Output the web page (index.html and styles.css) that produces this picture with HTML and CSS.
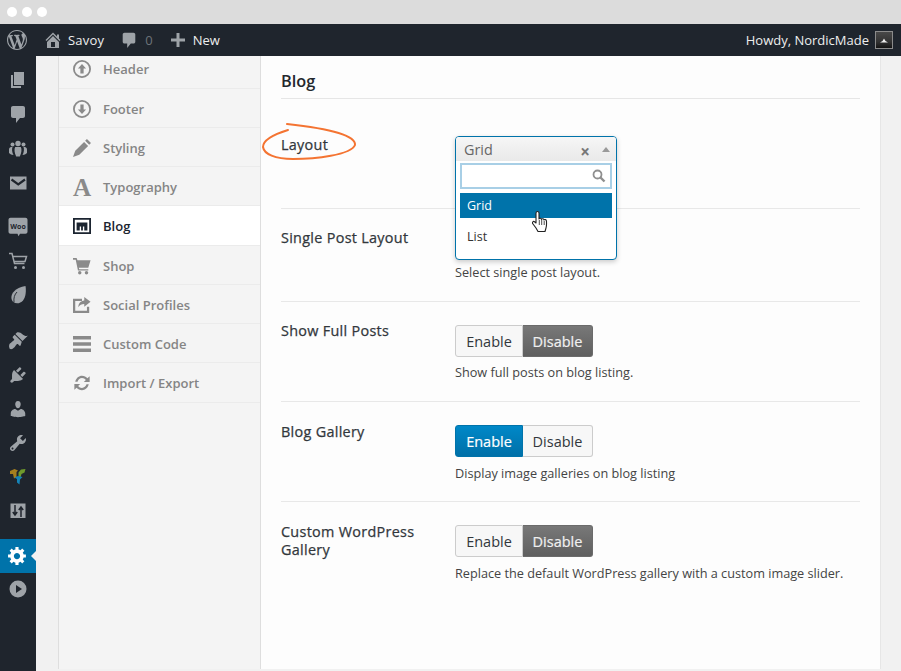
FILE: index.html
```html
<!DOCTYPE html>
<html lang="en">
<head>
<meta charset="utf-8">
<title>Blog settings</title>
<link rel="stylesheet" href="styles.css">
</head>
<body>
<div class="chrome"><i class="dot"></i><i class="dot"></i><i class="dot"></i></div>
<header class="adminbar">
  <svg class="ab-logo" viewBox="0 0 20 20"><path d="M20 10c0-5.51-4.49-10-10-10C4.48 0 0 4.49 0 10c0 5.52 4.48 10 10 10 5.51 0 10-4.48 10-10zM7.78 15.37L4.37 6.22c.55-.02 1.17-.08 1.17-.08.5-.06.44-1.13-.06-1.11 0 0-1.45.11-2.37.11-.18 0-.37 0-.58-.01C4.12 2.69 6.87 1.11 10 1.11c2.33 0 4.45.87 6.05 2.34-.68-.11-1.65.39-1.65 1.58 0 .74.45 1.36.9 2.1.35.61.55 1.36.55 2.46 0 1.49-1.4 5-1.4 5l-3.03-8.37c.54-.02.82-.17.82-.17.5-.05.44-1.25-.06-1.22 0 0-1.44.12-2.38.12-.87 0-2.33-.12-2.33-.12-.5-.03-.56 1.2-.06 1.22l.92.08 1.26 3.41zM17.41 10c.24-.64.74-1.87.43-4.25.7 1.29 1.05 2.71 1.05 4.25 0 3.29-1.73 6.24-4.4 7.78.97-2.59 1.94-5.2 2.92-7.78zM6.1 18.09C3.12 16.65 1.11 13.53 1.11 10c0-1.3.23-2.48.72-3.59C3.25 10.3 4.67 14.2 6.1 18.09zm4.03-6.63l2.58 6.98c-.86.29-1.76.45-2.71.45-.79 0-1.57-.11-2.29-.33.81-2.38 1.62-4.72 2.42-7.1z"/></svg>
  <svg class="ab-home" viewBox="0 0 20 20"><path d="M16 8.5l1.53 1.53-1.06 1.06L10 4.62l-6.47 6.47-1.06-1.06L10 2.5l4 4v-2h2v4zm-6-2.46l6 5.99V18H4v-5.97zM12 17v-5H8v5h4z"/></svg>
  <span class="ab-text ab-site">Savoy</span>
  <svg class="ab-comment" viewBox="0 0 20 20"><path d="M5 2h10c1.1 0 2 .9 2 2v8c0 1.1-.9 2-2 2h-3l-4 5v-5H5c-1.1 0-2-.9-2-2V4c0-1.100.9-2 2-2z"/></svg>
  <span class="ab-count">0</span>
  <svg class="ab-plus" viewBox="0 0 14 14"><path d="M5.500 0h3v5.500H14v3H8.500V14h-3V8.500H0v-3h5.500z"/></svg>
  <span class="ab-text">New</span>
  <span class="ab-text ab-howdy">Howdy, NordicMade</span>
  <svg class="ab-avatar" viewBox="0 0 18 18"><defs><linearGradient id="av" x1="0" y1="0" x2="0" y2="1"><stop offset="0" stop-color="#4a4a4a"/><stop offset=".6" stop-color="#333"/><stop offset="1" stop-color="#111"/></linearGradient></defs><rect x=".5" y=".5" width="17" height="17" fill="url(#av)" stroke="#8b8b8b"/><path d="M5 11.500l2.500-1.500L9 7.500l1.500 2.500 2.500 1.500z" fill="#eee"/></svg>
</header>
<div class="layout">
  <nav class="sidemenu">
    <svg class="sm" viewBox="0 0 20 20"><path d="M6 15V2h10v13H6zm-1 1h8v2H3V5h2v11z"/></svg>
    <svg class="sm" viewBox="0 0 20 20"><path d="M5 2h10c1.1 0 2 .9 2 2v8c0 1.1-.9 2-2 2h-3l-4 5v-5H5c-1.1 0-2-.9-2-2V4c0-1.100.9-2 2-2z"/></svg>
    <svg class="sm" viewBox="0 0 20 20"><circle cx="4.500" cy="6.500" r="2"/><circle cx="15.500" cy="6.500" r="2"/><circle cx="10" cy="5.500" r="2.700"/><path d="M1 15v-3.500c0-1.500 1-2.500 2.300-2.500h1.200c-.8 2-.5 5.500 1 8-2 0-3.200-1-4.500-2zM19 15v-3.500c0-1.500-1-2.500-2.300-2.500h-1.200c.8 2 .5 5.500-1 8 2 0 3.200-1 4.500-2zM7.200 9h5.600c1.200 2 .8 6-1 9.500H8.200c-1.800-3.500-2.200-7.500-1-9.500z"/></svg>
    <svg class="sm" viewBox="0 0 20 20"><path d="M2 3.500h16.500v13H2z"/><path d="M3.500 6.500l6.750 4.800 6.750-4.800" fill="none" stroke="#1f252d" stroke-width="2.200"/></svg>
    <svg class="sm sm-gap" viewBox="0 0 20 20"><path d="M2.500 .8h15c1.100 0 2 .9 2 2v12c0 1.100-.9 2-2 2h-5.500l-1.500 2.500-1-2.500H2.500c-1.100 0-2-.9-2-2v-12c0-1.100.9-2 2-2z"/><text x="10" y="11.500" text-anchor="middle" class="woo">Woo</text></svg>
    <svg class="sm" viewBox="0 0 20 20"><path d="M1 2.500h3l2.500 10h10M4.800 5.500H18.500l-1.500 5H6" fill="none" stroke="#9ea3a8" stroke-width="1.500"/><circle cx="7.500" cy="16.500" r="1.500"/><circle cx="15.500" cy="16.500" r="1.500"/></svg>
    <svg class="sm" viewBox="0 0 20 20"><path d="M17.500 1c.8 5 .3 11-2.500 14.500-2.500 3-6.800 3.800-9.500 1.600C2.700 14.800 2.800 10.500 5.300 7.200 8 3.700 13 1.500 17.500 1z"/><path d="M9 7C6.500 9.500 5.500 13 6 17" fill="none" stroke="#1f252d" stroke-width=".9"/></svg>
    <svg class="sm sm-gap-l" viewBox="0 0 20 20"><path d="M14.480 11.060L7.410 3.990l1.500-1.500c.5-.56 2.300-.47 3.510.32 1.210.8 1.430 1.280 2.910 2.100 1.180.64 2.450 1.260 4.450.85zm-.71.710L6.700 4.700 4.930 6.470c-.39.39-.39 1.020 0 1.410l1.060 1.060c.39.39.39 1.030 0 1.420-.6.600-1.430 1.110-2.210 1.690-.35.260-.7.530-1.010.84C1.430 13.230.4 15.130 1.500 18.500c1.470 1.470 3.350.42 4.710-.91.31-.31.58-.66.84-1.010.58-.78 1.090-1.610 1.690-2.210.39-.39 1.020-.39 1.410 0l1.060 1.060c.39.39 1.020.39 1.410 0z"/></svg>
    <svg class="sm" viewBox="0 0 20 20"><path d="M13.110 4.360L9.870 7.600 8 5.730l3.240-3.240c.35-.34 1.050-.2 1.560.32.52.51.66 1.210.31 1.550zm-8 1.770l.91-1.120 9.010 9.010-1.190.84c-.71.71-2.630 1.160-3.820 1.160H6.140L4.900 17.260c-.59.59-1.540.59-2.120 0-.59-.58-.59-1.530 0-2.120l1.240-1.240v-3.880c0-1.130.4-3.190 1.090-3.890zm7.260 3.970l3.240-3.240c.34-.35 1.040-.21 1.550.31.52.51.66 1.210.31 1.550l-3.240 3.250z"/></svg>
    <svg class="sm" viewBox="0 0 20 20"><path d="M10 9.250c-2.270 0-2.730-3.440-2.730-3.440C7 4.020 7.820 2 9.970 2c2.160 0 2.980 2.020 2.710 3.810 0 0-.41 3.440-2.680 3.440zm0 2.570L12.720 10c2.390 0 4.520 2.330 4.520 4.530v2.490s-3.650 1.130-7.240 1.130c-3.650 0-7.240-1.130-7.240-1.130v-2.490c0-2.250 1.940-4.480 4.470-4.480z"/></svg>
    <svg class="sm" viewBox="0 0 20 20"><path d="M16.680 9.770c-1.340 1.340-3.300 1.670-4.950.99l-5.410 6.520c-.99.99-2.590.99-3.580 0s-.99-2.590 0-3.570l6.520-5.420c-.68-1.650-.35-3.610.99-4.950 1.280-1.280 3.120-1.620 4.720-1.060l-2.890 2.890 2.820 2.820 2.860-2.870c.53 1.580.18 3.390-1.080 4.650zM3.810 16.210c.4.39 1.040.39 1.430 0 .4-.4.4-1.040 0-1.430-.39-.4-1.030-.4-1.430 0-.39.39-.39 1.030 0 1.430z"/></svg>
    <svg class="sm" viewBox="0 0 20 20"><path d="M2 4l4.500-2 3.500 1.500-1.500 1.500v5l-2.500 1.500-1-4.500L2 7z" fill="#a57f1f"/><path d="M10.500 5.500l2.500-3L17.500 2l-1 3.500-3 1.500-1 3.500-2-1z" fill="#6f9a2c"/><path d="M6.500 10.500L10 9l4.500 1-2.500 2.500-.5 5-2.500-2v-3.500z" fill="#1584b8"/></svg>
    <svg class="sm" viewBox="0 0 20 20"><rect x="2.500" y="2.500" width="15" height="14.500"/><path d="M7 4v9M4.800 11l2.200 3 2.200-3M13 16V7M10.800 9L13 6l2.200 3" fill="none" stroke="#1f252d" stroke-width="1.500"/></svg>
    <div class="sm-active">
      <svg class="sm-gear" viewBox="0 0 20 20"><path d="M18 12h-2.180c-.17.7-.44 1.350-.81 1.930l1.540 1.540-2.100 2.100-1.540-1.540c-.58.360-1.230.630-1.910.790V19H8v-2.180c-.68-.16-1.330-.43-1.910-.79l-1.540 1.540-2.120-2.120 1.540-1.540c-.36-.58-.63-1.230-.79-1.910H1V9.030h2.170c.16-.7.440-1.350.8-1.940L2.430 5.550l2.100-2.100 1.540 1.540c.58-.37 1.240-.64 1.930-.81V2h3v2.180c.68.160 1.330.43 1.910.790l1.540-1.540 2.120 2.120-1.540 1.540c.36.590.64 1.240.8 1.940H18V12zm-8.500 1.500c1.660 0 3-1.340 3-3s-1.340-3-3-3-3 1.340-3 3 1.340 3 3 3z"/></svg>
      <i class="sm-arrow"></i>
    </div>
    <svg class="sm" viewBox="0 0 20 20"><path fill-rule="evenodd" d="M10 1.500a8.500 8.500 0 1 1 0 17 8.500 8.500 0 0 1 0-17zM8 6v8l6-4z"/></svg>
  </nav>

  <div class="panel">
    <aside class="tabs">
      <a class="tab tab-first"><svg class="ti" viewBox="0 0 20 20"><circle cx="10" cy="10" r="9" fill="none" stroke="#8a8a8a" stroke-width="2"/><path d="M10 4.500l4.500 5h-2.700V15H8.200V9.500H5.500z"/></svg>Header</a>
      <a class="tab"><svg class="ti" viewBox="0 0 20 20"><circle cx="10" cy="10" r="9" fill="none" stroke="#8a8a8a" stroke-width="2"/><path d="M10 15.500l4.500-5h-2.700V5H8.200v5.500H5.500z"/></svg>Footer</a>
      <a class="tab"><svg class="ti" viewBox="0 0 20 20"><path d="M15.500 0l4.500 4.500-2 2-4.500-4.500zM12.300 3.200l4.500 4.500L7 17.500 0 20l2.500-7z"/></svg>Styling</a>
      <a class="tab"><svg class="ti ti-a" viewBox="0 0 20 20"><text x="10" y="19.500" text-anchor="middle" class="glyph-a">A</text></svg>Typography</a>
      <a class="tab tab-on"><svg class="ti" viewBox="0 0 20 20"><path fill="#1b2430" fill-rule="evenodd" d="M0 1h20v18H0zM2 3v14h16V3z"/><path fill="#1b2430" d="M4 6h12v9h-3.500v-4.500h-1.500V15H9v-4.500H7.500V15H4z"/></svg>Blog</a>
      <a class="tab"><svg class="ti" viewBox="0 0 20 20"><path d="M0 1h4l1 2.500h14.500L17 12H6.500l.4 1.500H17v1.500H5.500L3 3H0z"/><circle cx="7.500" cy="17.500" r="1.900"/><circle cx="15" cy="17.500" r="1.900"/></svg>Shop</a>
      <a class="tab"><svg class="ti" viewBox="0 0 20 20"><path d="M0 3h10v2.500H2.500v11h13V12H18v7H0z"/><path d="M12.500 1l7 5.500-7 5.500V8.800c-3 0-5 1-6.500 3.700 0-4.500 2.500-7 6.500-7.500z"/></svg>Social Profiles</a>
      <a class="tab"><svg class="ti" viewBox="0 0 20 20"><path d="M0 1h20v4H0zM0 8h20v4H0zM0 15h20v4H0z"/></svg>Custom Code</a>
      <a class="tab"><svg class="ti" viewBox="0 0 20 20"><path d="M2.500 8.500C3.500 4.500 6.500 2 10 2c2.500 0 4.500 1 6 2.800L18.500 2.500V9h-6.500l2.300-2.300C13.200 5.300 11.800 4.500 10 4.500c-2.400 0-4.200 1.600-5 4zM17.500 11.500C16.500 15.500 13.500 18 10 18c-2.500 0-4.500-1-6-2.800L1.500 17.500V11H8l-2.300 2.300c1.100 1.400 2.500 2.200 4.300 2.200 2.400 0 4.200-1.600 5-4z"/></svg>Import / Export</a>
    </aside>
    <main class="content">
      <h1 class="title">Blog</h1>
      <section class="row row-first">
        <h2 class="label label-marked">Layout
          <svg class="ring" viewBox="0 0 96 40"><path d="M27 7C14 11 2 17 2 24c1 7 12 12 30 12 22 0 58-4 62-14 1-9-22-16-68-21" fill="none" stroke="#f47432" stroke-width="2" stroke-linecap="round"/></svg>
        </h2>
        <div class="field">
          <div class="select">
            <div class="select-head"><span>Grid</span><b class="clear">×</b><i class="caret"></i></div>
            <div class="search"><svg class="search-ic" viewBox="0 0 14 14"><circle cx="5.500" cy="5.500" r="4" fill="none" stroke="#8f8f8f" stroke-width="1.800"/><path d="M8.500 8.500l4 4" stroke="#8f8f8f" stroke-width="2.400"/></svg></div>
            <ul class="options"><li class="opt opt-on">Grid</li><li class="opt">List</li></ul>
            <svg class="hand" viewBox="0 0 17 24"><path d="M5.500 1.500c1 0 1.500.7 1.500 1.700V9c.2-1 2.500-1 2.500.4.300-1 2.500-.9 2.500.6.500-.8 2.500-.6 2.500 1.200 0 3 .3 4.500-.5 6.800l-1 3.500H6l-2-3.500L1 14c-1.300-1.500.2-3.200 1.500-2.200L4 13V3.200c0-1 .5-1.700 1.500-1.700z" fill="#fff" stroke="#222" stroke-width="1.100" stroke-linejoin="round"/><path d="M7.300 10v5M9.700 10v5M12.200 11v4" stroke="#222" stroke-width=".8"/></svg>
          </div>
        </div>
      </section>
      <section class="row">
        <h2 class="label">Single Post Layout</h2>
        <div class="field"><div class="under-select"></div><p class="desc">Select single post layout.</p></div>
      </section>
      <section class="row">
        <h2 class="label">Show Full Posts</h2>
        <div class="field">
          <div class="toggle"><span class="btn">Enable</span><span class="btn btn-off">Disable</span></div>
          <p class="desc">Show full posts on blog listing.</p>
        </div>
      </section>
      <section class="row row-low">
        <h2 class="label">Blog Gallery</h2>
        <div class="field">
          <div class="toggle"><span class="btn btn-on">Enable</span><span class="btn">Disable</span></div>
          <p class="desc">Display image galleries on blog listing</p>
        </div>
      </section>
      <section class="row row-low row-last">
        <h2 class="label">Custom WordPress Gallery</h2>
        <div class="field">
          <div class="toggle"><span class="btn">Enable</span><span class="btn btn-off">Disable</span></div>
          <p class="desc">Replace the default WordPress gallery with a custom image slider.</p>
        </div>
      </section>
    </main>
  </div>
</div>
</body>
</html>
```

FILE: styles.css
```css
* { box-sizing: border-box; }
html, body { margin: 0; padding: 0; height: 100%; }
body {
  width: 901px;
  height: 671px;
  overflow: hidden;
  background: #f1f1f1;
  font-family: "Open Sans", sans-serif;
  color: #32373c;
  display: flex;
  flex-direction: column;
}
.chrome {
  flex: 0 0 24px;
  background: #dcdcdc;
  display: flex;
  align-items: center;
  gap: 5px;
  padding-left: 7px;
}
.dot { width: 10px; height: 10px; border-radius: 50%; background: #fff; }
.adminbar {
  flex: 0 0 32px;
  background: #1f252d;
  display: flex;
  align-items: center;
  color: #eee;
  fill: #9ea3a8;
  font-size: 13px;
}
.ab-logo { width: 20px; height: 20px; margin-left: 7px; }
.ab-home { width: 20px; height: 20px; margin-left: 16px; }
.ab-text { color: #eee; }
.ab-site { margin-left: 5px; letter-spacing: .2px; }
.ab-comment { width: 18px; height: 18px; margin-left: 16px; }
.ab-count { color: #6d7379; margin-left: 7px; }
.ab-plus { width: 14px; height: 14px; margin-left: 18px; margin-right: 8px; }
.ab-howdy { margin-left: auto; }
.ab-avatar { width: 18px; height: 18px; margin-left: 6px; margin-right: 8px; }
.layout { flex: 1; display: flex; min-height: 0; }
.sidemenu {
  flex: 0 0 36px;
  background: #1f252d;
  fill: #9ea3a8;
  padding-top: 14px;
  display: flex;
  flex-direction: column;
  align-items: center;
}
.sm { width: 20px; height: 20px; margin-bottom: 14.2px; flex: none; }
.sm-gap { margin-top: 10px; }
.sm-gap-l { margin-top: 11px; }
.woo { font: 700 7px "Open Sans", sans-serif; fill: #1f252d; }
.sm-active {
  width: 36px;
  height: 34px;
  margin-top: 3.4px;
  margin-bottom: 6px;
  background: #0073aa;
  display: flex;
  align-items: center;
  justify-content: center;
  position: relative;
  flex: none;
}
.sm-gear { width: 21px; height: 21px; fill: #fff; margin-left: -1px; }
.sm-arrow {
  position: absolute;
  right: 0;
  top: 12px;
  border: 5px solid transparent;
  border-left: 0;
  border-right-color: #f1f1f1;
}
.panel {
  flex: 0 0 823px;
  margin-left: 22px;
  height: 613px;
  display: flex;
  border-left: 1px solid #dedede;
  border-right: 1px solid #e6e6e6;
  overflow: hidden;
}
.tabs {
  flex: 0 0 202px;
  background: #f4f4f4;
  border-right: 1px solid #dedede;
  display: flex;
  flex-direction: column;
}
.tab {
  flex: 0 0 39.25px;
  display: flex;
  align-items: center;
  padding: 2px 0 0 14px;
  gap: 12px;
  font-size: 13px;
  font-weight: 600;
  color: #858585;
  fill: #8a8a8a;
  border-bottom: 1px solid #ebebeb;
}
.tab-first { flex-basis: 32.5px; padding: 0 0 6px 14px; }
.tab-on { background: #fff; color: #1b2430; }
.ti { width: 18px; height: 18px; flex: none; }
.ti-a { overflow: visible; }
.glyph-a { font: 700 28px "Liberation Serif", serif; fill: #8a8a8a; }
.content {
  flex: 1;
  background: #fdfdfd;
  padding: 0 20px;
}
.title {
  margin: 0;
  height: 43px;
  padding-top: 14px;
  font-size: 16.3px;
  line-height: 22px;
  font-weight: 600;
  color: #23282d;
  border-bottom: 1px solid #e6e6e6;
}
.row {
  display: grid;
  grid-template-columns: 174px 1fr;
  padding: 20px 0;
  border-bottom: 1px solid #e8e8e8;
}
.row-first { padding: 37px 0 0; height: 110px; }
.row-low { padding-bottom: 19px; }
.row-low .label { margin-top: 1px; }
.row-low .desc { margin-top: 7px; }
.row-last { border-bottom: 0; }
.label {
  margin: 0;
  font-size: 14.4px;
  line-height: 18px;
  font-weight: 400;
  letter-spacing: .3px;
  -webkit-text-stroke: .25px #32373c;
  color: #32373c;
}
.label-marked { position: relative; }
.ring {
  position: absolute;
  left: -20px;
  top: -13px;
  width: 96px;
  height: 40px;
  overflow: visible;
}
.field { min-width: 0; }
.select {
  position: relative;
  width: 162px;
  height: 124px;
  background: #fff;
  border: 1px solid #0073aa;
  border-radius: 4px;
  box-shadow: 0 2px 5px rgba(0,0,0,.2);
  z-index: 2;
}
.select-head {
  height: 24px;
  margin-bottom: 2px;
  border-radius: 3px 3px 0 0;
  background: linear-gradient(#f6f6f6, #e9e9e9);
  display: flex;
  align-items: center;
  padding: 0 8px;
  font-size: 14.4px;
  color: #666;
}
.clear { margin-left: auto; font-size: 17px; line-height: 14px; color: #777; padding-top: 5px; }
.caret {
  margin-left: 12px;
  border: 4px solid transparent;
  border-top: 0;
  border-bottom: 5px solid #999;
  margin-right: -2px;
}
.search {
  height: 26px;
  margin: 0 4px 4px;
  border: 2px solid #a8cfe6;
  background: #fff;
  display: flex;
  align-items: center;
  justify-content: flex-end;
  padding-right: 4px;
}
.search-ic { width: 14px; height: 14px; }
.options { list-style: none; margin: 0 4px; padding: 0; }
.opt { height: 25px; line-height: 25px; padding-left: 7px; font-size: 12.5px; font-weight: 400; color: #333; margin-bottom: 6px; }
.opt-on { background: #0073aa; color: #fff; }
.hand { position: absolute; left: 76px; top: 73px; width: 17px; height: 24px; }
.under-select { height: 34px; }
.toggle { display: flex; margin-top: 3px; width: 138px; height: 32px; }
.btn {
  flex: 0 0 68px;
  display: flex;
  align-items: center;
  justify-content: center;
  font-size: 14.5px;
  font-weight: 400;
  color: #32373c;
  background: #f7f7f7;
  border: 1px solid #ccc;
  border-radius: 3px 0 0 3px;
}
.btn + .btn { flex-basis: 70px; border-left: 0; border-radius: 0 3px 3px 0; }
.btn-off, .btn + .btn-off {
  background: linear-gradient(#787878, #5f5f5f);
  border-color: #6b6b6b;
  color: #f0f0f0;
  -webkit-text-stroke: .2px #f0f0f0;
}
.btn-on {
  background: linear-gradient(#0088c8, #0070a8);
  border-color: #0073aa;
  color: #fff;
  -webkit-text-stroke: .2px #fff;
}
.desc {
  margin: 6px 0 0;
  font-size: 12.7px;
  line-height: 18px;
  color: #444;
}
.under-select + .desc { margin-top: 0; }
```
